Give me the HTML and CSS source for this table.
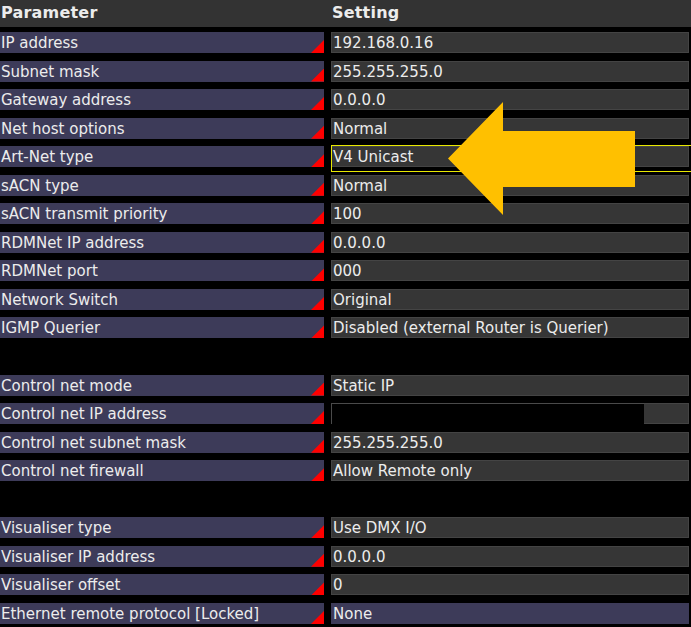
FILE: index.html
```html
<!DOCTYPE html>
<html>
<head>
<meta charset="utf-8">
<link rel="stylesheet" href="styles.css">
</head>
<body>
<div class="page">
  <div class="header">
    <div class="hcell">Parameter</div>
    <div class="hcell">Setting</div>
  </div>
  <div class="grid">
    <div class="label">IP address</div><div class="value">192.168.0.16</div>
    <div class="label">Subnet mask</div><div class="value">255.255.255.0</div>
    <div class="label">Gateway address</div><div class="value">0.0.0.0</div>
    <div class="label">Net host options</div><div class="value">Normal</div>
    <div class="label">Art-Net type</div><div class="value selected">V4 Unicast</div>
    <div class="label">sACN type</div><div class="value">Normal</div>
    <div class="label">sACN transmit priority</div><div class="value">100</div>
    <div class="label">RDMNet IP address</div><div class="value">0.0.0.0</div>
    <div class="label">RDMNet port</div><div class="value">000</div>
    <div class="label">Network Switch</div><div class="value">Original</div>
    <div class="label">IGMP Querier</div><div class="value">Disabled (external Router is Querier)</div>
    <div class="blank"></div><div class="blank"></div>
    <div class="label">Control net mode</div><div class="value">Static IP</div>
    <div class="label">Control net IP address</div><div class="value redacted"><span class="mask"></span></div>
    <div class="label">Control net subnet mask</div><div class="value">255.255.255.0</div>
    <div class="label">Control net firewall</div><div class="value">Allow Remote only</div>
    <div class="blank"></div><div class="blank"></div>
    <div class="label">Visualiser type</div><div class="value">Use DMX I/O</div>
    <div class="label">Visualiser IP address</div><div class="value">0.0.0.0</div>
    <div class="label">Visualiser offset</div><div class="value">0</div>
    <div class="label">Ethernet remote protocol [Locked]</div><div class="value locked">None</div>
  </div>
  <svg class="arrow" width="691" height="627" viewBox="0 0 691 627">
    <polygon points="448,158.5 503,102 503,131 635,131 635,187 503,187 503,215" fill="#FFC000"/>
  </svg>
</div>
</body>
</html>
```
FILE: styles.css
```css
html, body {
  margin: 0;
  padding: 0;
  background: #000;
}
.page {
  position: relative;
  width: 691px;
  height: 627px;
  overflow: hidden;
  font-family: "DejaVu Sans", Verdana, sans-serif;
  color: #ececec;
}
.header {
  display: grid;
  grid-template-columns: 331px 1fr;
  height: 27px;
  background: #333333;
}
.hcell {
  font-weight: bold;
  font-size: 16px;
  padding-left: 1px;
  line-height: 25px;
  height: 27px;
  letter-spacing: 0.2px;
}
.grid {
  display: grid;
  grid-template-columns: 324px 358px;
  column-gap: 7px;
  grid-auto-rows: 21px;
  row-gap: 7.55px;
  margin-top: 5px;
}
.label, .value {
  font-size: 15px;
  line-height: 22px;
  white-space: nowrap;
  overflow: visible;
  padding-left: 1px;
  box-sizing: border-box;
  letter-spacing: 0px;
}
.label {
  position: relative;
  background: #3d3b59;
}
.label::after {
  content: "";
  position: absolute;
  right: 0;
  bottom: 0;
  width: 13px;
  height: 13px;
  background: #ff0000;
  clip-path: polygon(100% 0, 100% 100%, 0 100%);
}
.value {
  position: relative;
  background: #363636;
  border: 1px solid #444444;
  line-height: 20px;
  padding-left: 1px;
}
.value.locked {
  background: #3d3b59;
  border-color: #3d3b59;
}
.value.selected::before {
  content: "";
  position: absolute;
  left: -1px;
  top: -2px;
  right: -10px;
  bottom: -6px;
  border: 1px solid #e8e800;
}
.value.redacted {
  padding: 0;
}
.mask {
  display: block;
  width: 313px;
  height: 21px;
  margin: -1px 0 0 -1px;
  background: #000;
  border-top: 1px solid #4a4a4a;
  border-left: 1px solid #4a4a4a;
  box-sizing: border-box;
}
.arrow {
  position: absolute;
  left: 0;
  top: 0;
  pointer-events: none;
}
```
